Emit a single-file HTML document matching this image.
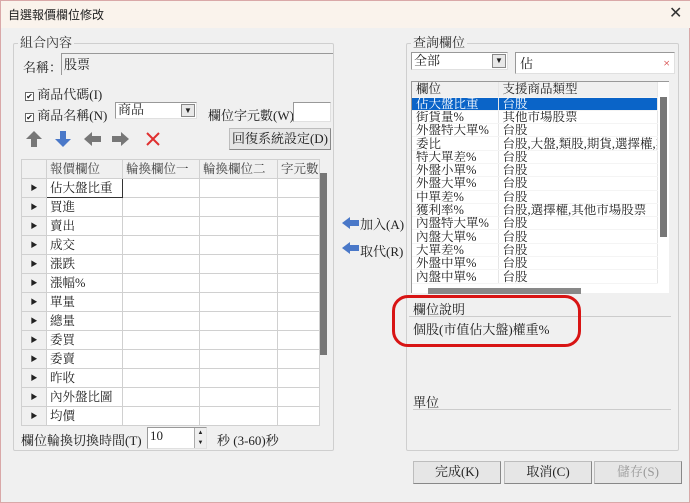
<!DOCTYPE html><html><head><meta charset="utf-8"><style>
*{box-sizing:border-box;margin:0;padding:0}
body{width:690px;height:503px;background:#f0f0f0;font-family:"Liberation Serif","Noto Serif CJK SC","Noto Sans CJK TC",serif;font-size:13px;color:#222;position:relative;overflow:hidden;border:1px solid #d9a8a8}
.a{position:absolute;white-space:nowrap}
.gb{position:absolute;border:1px solid #cfcfcf;border-radius:2px}
.gt{position:absolute;background:#f0f0f0;padding:0 2px;font-size:13px;color:#333;line-height:14px}
.in{position:absolute;background:#fff;border:1px solid #999;border-right-color:#e0e0e0;border-bottom-color:#e0e0e0}
.btn{position:absolute;background:#e6e6e6;border:1px solid #bdbdbd;border-right-color:#888;border-bottom-color:#888;text-align:center;line-height:20px;font-size:13px}
table{border-collapse:collapse;table-layout:fixed}
.g td{border:1px solid #d0d0d0;height:19px;line-height:16px;background:#fff;padding:0 3px;font-size:12.5px;overflow:hidden}
.g tr.h td{background:#f0f0f0;color:#444}
.g td.rh{background:#f0f0f0;font-size:7px;text-align:center}
.l td{height:13.3px;line-height:12px;padding:0 4px;font-size:12.5px;border-right:1px solid #e6e6e6;border-bottom:1px solid #f4f4f4;overflow:hidden;white-space:nowrap}
.cb{display:inline-block;width:9px;height:9px;border:1px solid #666;font-size:8px;line-height:7px;text-align:center;background:#fff;vertical-align:middle}
</style></head><body>
<div class="a" style="left:0;top:0;width:690px;height:27px;background:#faf3ec"></div>
<div class="a" style="left:7px;top:5px;font-size:12px;font-family:'Noto Sans CJK TC',sans-serif">自選報價欄位修改</div>
<div class="a" style="left:668px;top:2px;font-size:16px;font-family:'DejaVu Sans',sans-serif;color:#333">✕</div>

<div class="gb" style="left:12px;top:42px;width:321px;height:408px"></div>
<div class="gt" style="left:17px;top:35px">組合內容</div>
<div class="a" style="left:22px;top:56px">名稱：</div>
<div class="in" style="left:60px;top:52px;width:272px;height:22px;background:#f0f0f0;border-right:none;border-bottom:none;padding-left:2px">股票</div>
<div class="a" style="left:24px;top:83px"><span class="cb">✔</span> 商品代碼(I)</div>
<div class="a" style="left:24px;top:104px"><span class="cb">✔</span> 商品名稱(N)</div>
<div class="in" style="left:114px;top:101px;width:82px;height:17px;padding-left:2px;line-height:14px">商品<span style="position:absolute;right:1px;top:1px;width:14px;height:13px;background:#e8e8e8;border:1px solid #888;font-size:8px;text-align:center;line-height:11px">▼</span></div>
<div class="a" style="left:207px;top:104px">欄位字元數(W)</div>
<div class="in" style="left:292px;top:101px;width:38px;height:20px"></div>
<svg class="a" style="left:24px;top:128px" width="150" height="20">
<path d="M9 2 L17 10 H12 V18 H6 V10 H1 Z" fill="#777"/>
<path d="M38 18 L46 10 H41 V2 H35 V10 H30 Z" fill="#4a78c8"/>
<path d="M59 10 L67 3 V7 H76 V13 H67 V17 Z" fill="#777"/>
<path d="M104 10 L96 3 V7 H87 V13 H96 V17 Z" fill="#777"/>
<path d="M122 4 L134 16 M134 4 L122 16" stroke="#e03030" stroke-width="2"/>
</svg>
<div class="btn" style="left:228px;top:127px;width:102px;height:22px">回復系統設定(D)</div>

<table class="g a" style="left:20px;top:158px;width:299px">
<colgroup><col style="width:25px"><col style="width:76px"><col style="width:77px"><col style="width:78px"><col></colgroup>
<tr class="h"><td class="rh"></td><td>報價欄位</td><td>輪換欄位一</td><td>輪換欄位二</td><td>字元數</td></tr>
<tr><td class="rh">▶</td><td style="border:1.5px solid #333">佔大盤比重</td><td></td><td></td><td></td></tr>
<tr><td class="rh">▶</td><td>買進</td><td></td><td></td><td></td></tr>
<tr><td class="rh">▶</td><td>賣出</td><td></td><td></td><td></td></tr>
<tr><td class="rh">▶</td><td>成交</td><td></td><td></td><td></td></tr>
<tr><td class="rh">▶</td><td>漲跌</td><td></td><td></td><td></td></tr>
<tr><td class="rh">▶</td><td>漲幅%</td><td></td><td></td><td></td></tr>
<tr><td class="rh">▶</td><td>單量</td><td></td><td></td><td></td></tr>
<tr><td class="rh">▶</td><td>總量</td><td></td><td></td><td></td></tr>
<tr><td class="rh">▶</td><td>委買</td><td></td><td></td><td></td></tr>
<tr><td class="rh">▶</td><td>委賣</td><td></td><td></td><td></td></tr>
<tr><td class="rh">▶</td><td>昨收</td><td></td><td></td><td></td></tr>
<tr><td class="rh">▶</td><td>內外盤比圖</td><td></td><td></td><td></td></tr>
<tr><td class="rh">▶</td><td>均價</td><td></td><td></td><td></td></tr>
</table>
<div class="a" style="left:319px;top:172px;width:7px;height:182px;background:#777"></div>
<div class="a" style="left:20px;top:429px">欄位輪換切換時間(T)</div>
<div class="in" style="left:146px;top:426px;width:60px;height:22px;padding-left:2px">10<span style="position:absolute;right:0;top:0;width:12px;height:20px;background:#eee;border-left:1px solid #aaa;font-size:6px;text-align:center;line-height:10px">▲<br>▼</span></div>
<div class="a" style="left:216px;top:429px">秒 (3-60)秒</div>

<svg class="a" style="left:340px;top:215px" width="20" height="40"><path d="M1 7 L9 1 V4 H18 V10 H9 V13 Z M1 32 L9 26 V29 H18 V35 H9 V38 Z" fill="#4a78c8"/></svg>
<div class="a" style="left:359px;top:213px">加入(A)</div>
<div class="a" style="left:359px;top:240px">取代(R)</div>

<div class="gb" style="left:405px;top:42px;width:273px;height:408px"></div>
<div class="gt" style="left:410px;top:35px">查詢欄位</div>
<div class="in" style="left:410px;top:51px;width:97px;height:18px;padding-left:2px;line-height:15px">全部<span style="position:absolute;right:1px;top:1px;width:14px;height:14px;background:#e8e8e8;border:1px solid #888;font-size:8px;text-align:center;line-height:12px">▼</span></div>
<div class="in" style="left:514px;top:51px;width:160px;height:22px;padding-left:4px">佔<span style="position:absolute;right:4px;top:3px;color:#d03030;font-size:12px">×</span></div>
<div class="a" style="left:410px;top:80px;width:258px;height:212px;background:#fff;border-left:1px solid #999;border-top:1px solid #999"></div>
<table class="l a" style="left:411px;top:81px;width:246px">
<colgroup><col style="width:86px"><col></colgroup>
<tr><td style="background:#f0f0f0;height:15px">欄位</td><td style="background:#f0f0f0">支援商品類型</td></tr>
<tr style="background:#0a64c8;color:#fff"><td>佔大盤比重</td><td>台股</td></tr>
<tr><td>街貨量%</td><td>其他市場股票</td></tr>
<tr><td>外盤特大單%</td><td>台股</td></tr>
<tr><td>委比</td><td>台股,大盤,類股,期貨,選擇權,其</td></tr>
<tr><td>特大單差%</td><td>台股</td></tr>
<tr><td>外盤小單%</td><td>台股</td></tr>
<tr><td>外盤大單%</td><td>台股</td></tr>
<tr><td>中單差%</td><td>台股</td></tr>
<tr><td>獲利率%</td><td>台股,選擇權,其他市場股票</td></tr>
<tr><td>內盤特大單%</td><td>台股</td></tr>
<tr><td>內盤大單%</td><td>台股</td></tr>
<tr><td>大單差%</td><td>台股</td></tr>
<tr><td>外盤中單%</td><td>台股</td></tr>
<tr><td>內盤中單%</td><td>台股</td></tr>
</table>
<div class="a" style="left:659px;top:96px;width:7px;height:140px;background:#777"></div>
<div class="a" style="left:427px;top:287px;width:153px;height:6px;background:#888"></div>
<div class="a" style="left:412px;top:298px">欄位說明</div>
<div class="a" style="left:408px;top:315px;width:262px;height:1px;background:#ccc"></div>
<div class="a" style="left:412px;top:318px">個股(市值佔大盤)權重%</div>
<div class="a" style="left:391px;top:294px;width:189px;height:52px;border:3px solid #d81414;border-radius:16px"></div>
<div class="a" style="left:412px;top:391px">單位</div>
<div class="a" style="left:412px;top:408px;width:258px;height:1px;background:#ccc"></div>

<div class="btn" style="left:412px;top:460px;width:88px;height:23px">完成(K)</div>
<div class="btn" style="left:503px;top:460px;width:88px;height:23px">取消(C)</div>
<div class="btn" style="left:593px;top:460px;width:88px;height:23px;color:#999">儲存(S)</div>
</body></html>
